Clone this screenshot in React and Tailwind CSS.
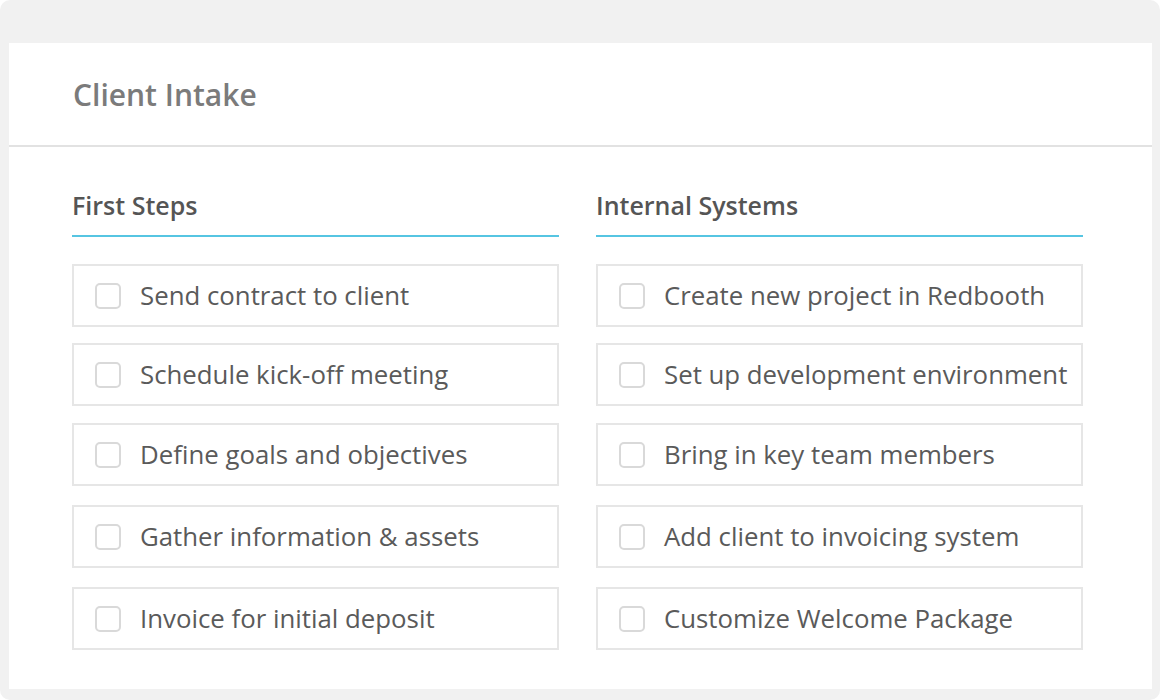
import React from "react";

const FIRST_STEPS = [
  "Send contract to client",
  "Schedule kick-off meeting",
  "Define goals and objectives",
  "Gather information & assets",
  "Invoice for initial deposit",
];

const INTERNAL_SYSTEMS = [
  "Create new project in Redbooth",
  "Set up development environment",
  "Bring in key team members",
  "Add client to invoicing system",
  "Customize Welcome Package",
];

// spacing in the mockup isn't perfectly even
const ROW_GAP = ["", "mt-[16px]", "mt-[17px]", "mt-[19px]", "mt-[19px]"];

function TaskItem({ label, className }) {
  return (
    <label className={`flex h-[63px] items-center border-2 border-[#e6e6e6] bg-white pl-[21px] cursor-pointer ${className}`}>
      <span className="h-[26px] w-[26px] shrink-0 rounded-[5px] border-2 border-[#d9d9d9] bg-white" />
      <span className="ml-[19px] text-[25.8px] leading-none text-[#5a5a5a]">{label}</span>
    </label>
  );
}

function Column({ title, items }) {
  return (
    <div className="w-[487px]">
      <h3 className="border-b-2 border-[#56c5e2] pb-[16px] text-[25px] leading-[27px] font-semibold text-[#555]">
        {title}
      </h3>
      <div className="mt-[27px] flex flex-col">
        {items.map((it, i) => (
          <TaskItem key={it} label={it} className={ROW_GAP[i]} />
        ))}
      </div>
    </div>
  );
}

export default function App() {
  return (
    <div className="h-[700px] w-[1160px] bg-white" style={{ fontFamily: '"Open Sans", "Noto Sans", sans-serif' }}>
      <div className="h-full rounded-[10px] bg-[#f1f1f1] pb-[11px] pl-[9px] pr-[8px] pt-[43px]">
        <div className="flex h-full flex-col bg-white">
          {/* ── HEADER ── */}
          <div className="flex h-[104px] items-center border-b-2 border-[#e2e2e2] pl-[64px]">
            <h1 className="text-[30px] font-semibold text-[#7b7b7b]">Client Intake</h1>
          </div>

          {/* ── COLUMNS ── */}
          <div className="flex gap-[37px] pl-[63px] pt-[45px]">
            <Column title="First Steps" items={FIRST_STEPS} />
            <Column title="Internal Systems" items={INTERNAL_SYSTEMS} />
          </div>
        </div>
      </div>
    </div>
  );
}
